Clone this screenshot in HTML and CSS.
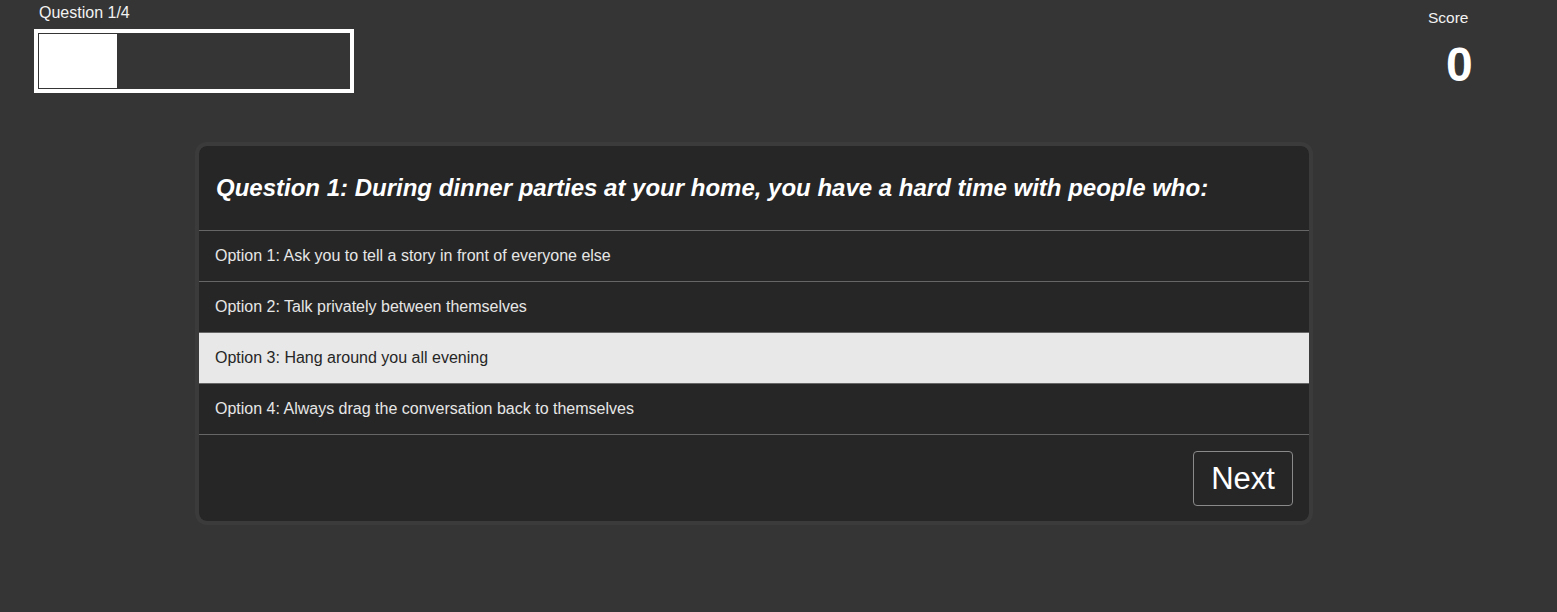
FILE: index.html
```html
<!DOCTYPE html>
<html>
<head>
<meta charset="utf-8">
<link rel="stylesheet" href="styles.css">
</head>
<body>
<header class="top">
  <div class="progress-block">
    <div class="progress-label">Question 1/4</div>
    <div class="progress">
      <div class="progress-fill" style="width:25%"></div>
    </div>
  </div>
  <div class="score">
    <div class="score-label">Score</div>
    <div class="score-value">0</div>
  </div>
</header>
<main class="card-wrap">
  <section class="card">
    <h1 class="question">Question 1: During dinner parties at your home, you have a hard time with people who:</h1>
    <ul class="options">
      <li class="option">Option 1: Ask you to tell a story in front of everyone else</li>
      <li class="option">Option 2: Talk privately between themselves</li>
      <li class="option selected">Option 3: Hang around you all evening</li>
      <li class="option">Option 4: Always drag the conversation back to themselves</li>
    </ul>
    <div class="footer">
      <button class="next">Next</button>
    </div>
  </section>
</main>
</body>
</html>
```

FILE: styles.css
```css
* { box-sizing: border-box; }
html, body { margin: 0; padding: 0; }
body {
  background: #353535;
  font-family: "Liberation Sans", Arial, sans-serif;
  color: #ffffff;
  width: 1557px;
  height: 612px;
  overflow: hidden;
}
.top {
  display: flex;
  justify-content: space-between;
  padding: 4px 0 0 34px;
}
.progress-label {
  font-size: 16px;
  line-height: 18px;
  padding-left: 5px;
  margin-bottom: 7px;
  color: #f2f2f2;
}
.progress {
  width: 320px;
  height: 64px;
  border: 4px solid #ffffff;
  padding: 1px;
}
.progress-fill {
  height: 100%;
  background: #ffffff;
}
.score {
  width: 160px;
  padding-top: 5px;
  display: flex;
  flex-direction: column;
}
.score-label {
  font-size: 15.5px;
  line-height: 18px;
  padding-left: 31px;
  color: #f2f2f2;
}
.score-value {
  font-size: 48px;
  font-weight: bold;
  line-height: 54px;
  padding-left: 49px;
  margin-top: 11px;
}
.card-wrap {
  padding: 49px 0 0 195px;
}
.card {
  width: 1118px;
  border: 4px solid #3b3b3b;
  border-radius: 12px;
  background: #262626;
  background-clip: padding-box;
  overflow: hidden;
}
.question {
  margin: 0;
  height: 85px;
  padding: 27px 0 0 17px;
  font-size: 24px;
  line-height: 30px;
  font-weight: bold;
  font-style: italic;
  border-bottom: 1px solid #666666;
}
.options {
  list-style: none;
  margin: 0;
  padding: 0;
}
.option {
  height: 51px;
  padding: 15px 0 0 16px;
  font-size: 16px;
  line-height: 20px;
  color: #e6e6e6;
  border-bottom: 1px solid #666666;
}
.option.selected {
  background: #e8e8e8;
  color: #262626;
}
.footer {
  display: flex;
  justify-content: flex-end;
  padding: 16px 16px 15px 0;
}
.next {
  width: 100px;
  height: 55px;
  background: transparent;
  border: 1px solid #8a8a8a;
  border-radius: 4px;
  color: #ffffff;
  font-family: "Liberation Sans", Arial, sans-serif;
  font-size: 31px;
  padding: 0;
}
```
